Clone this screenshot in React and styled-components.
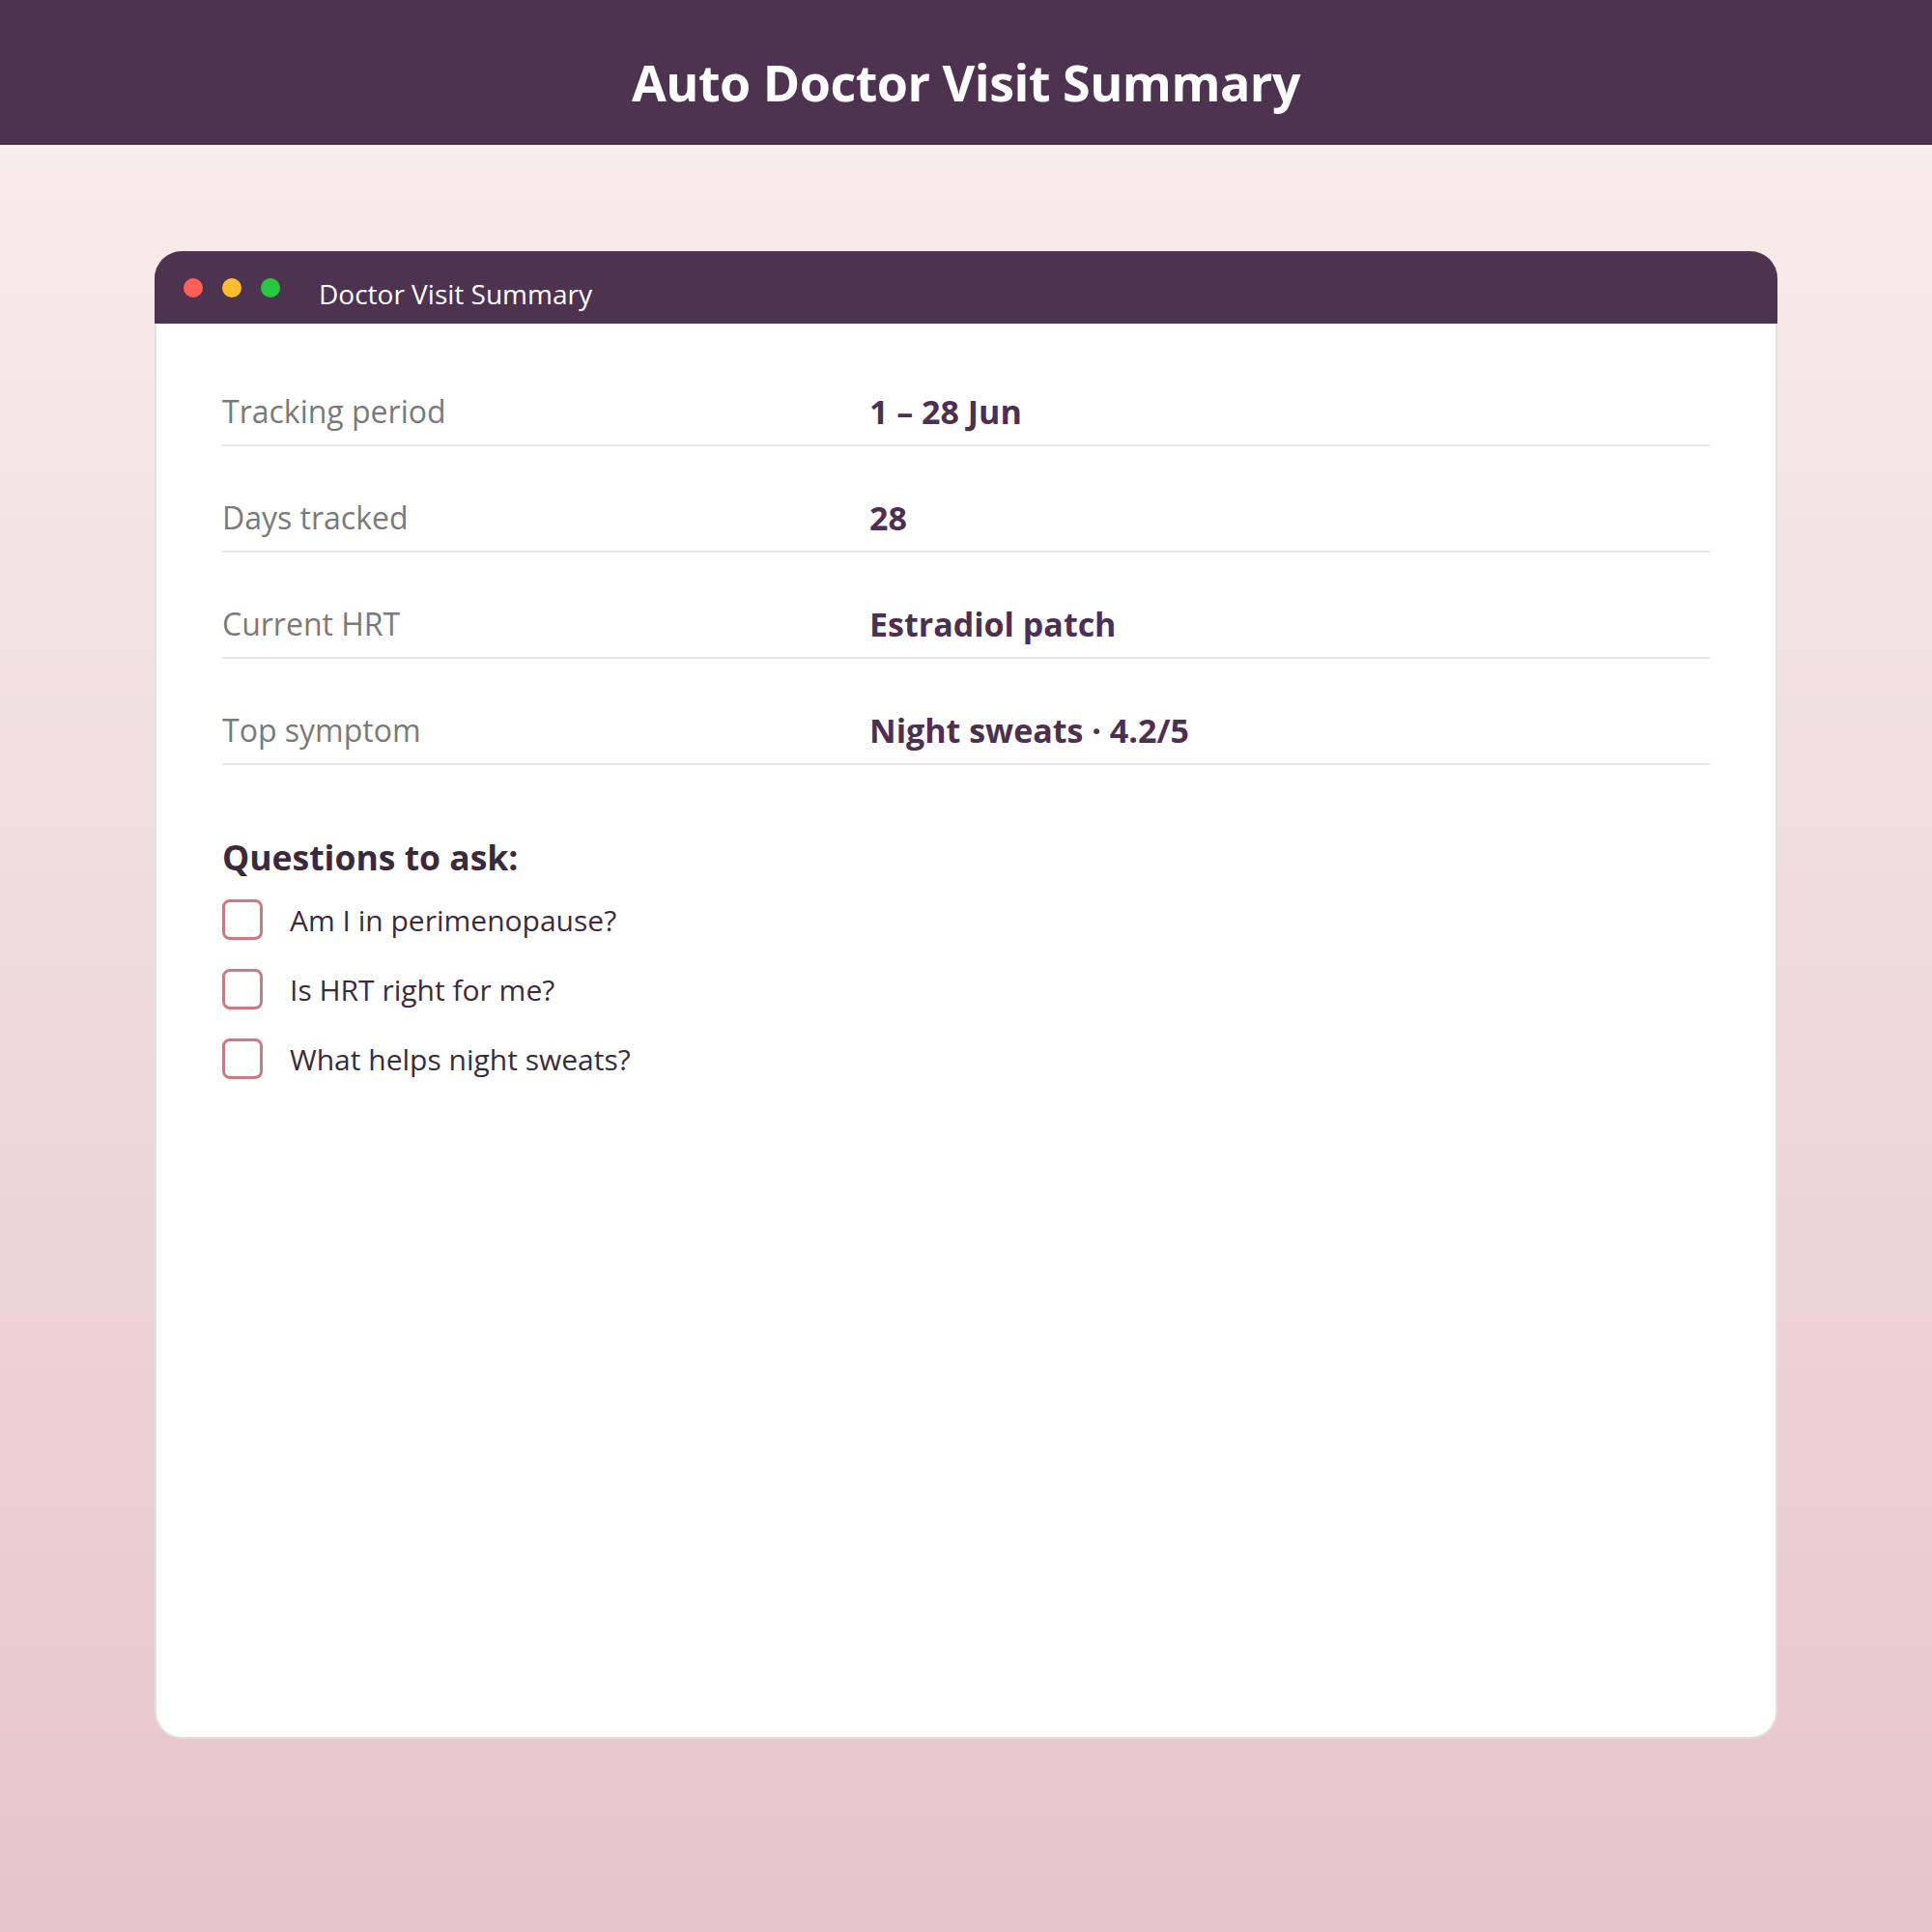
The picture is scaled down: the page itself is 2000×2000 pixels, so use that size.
import React from 'react'
import styled, { createGlobalStyle } from 'styled-components'

const GlobalStyle = createGlobalStyle`
    body {
        margin: 0;
        font-family: "Open Sans", "Noto Sans", sans-serif;
    }
`

const rows = [
    { label: "Tracking period", value: "1 – 28 Jun" },
    { label: "Days tracked", value: "28" },
    { label: "Current HRT", value: "Estradiol patch" },
    { label: "Top symptom", value: "Night sweats · 4.2/5" }
]

const questions = [
    "Am I in perimenopause?",
    "Is HRT right for me?",
    "What helps night sweats?"
]

export default function App() {
    return (
        <>
            <GlobalStyle />
            <Page>
                <Header>
                    <h1>Auto Doctor Visit Summary</h1>
                </Header>
                <Main>
                    <Card>
                        <TitleBar>
                            <Dot color="#ff5f57" />
                            <Dot color="#febc2e" />
                            <Dot color="#28c840" />
                            <WindowTitle>Doctor Visit Summary</WindowTitle>
                        </TitleBar>
                        <Body>
                            {rows.map((row) =>
                                <Row key={row.label}>
                                    <Label>{row.label}</Label>
                                    <Value>{row.value}</Value>
                                </Row>
                            )}
                            <Heading>Questions to ask:</Heading>
                            {questions.map((q) =>
                                <Question key={q}>
                                    <Box />
                                    <span>{q}</span>
                                </Question>
                            )}
                        </Body>
                    </Card>
                </Main>
            </Page>
        </>
    )
}

const Page = styled.div`
    min-height: 2000px;
    background: linear-gradient(180deg, #f8f0ed 0%, #e7c5ca 100%);
`

const Header = styled.header`
    height: 150px;
    box-sizing: border-box;
    padding-top: 18px;
    background: #4d3350;
    display: flex;
    align-items: center;
    justify-content: center;
    h1 {
        margin: 0;
        color: #ffffff;
        font-size: 52px;
        font-weight: 700;
        letter-spacing: -0.5px;
    }
`

const Main = styled.main`
    padding: 110px 160px 200px;
`

const Card = styled.section`
    height: 1540px;
    display: flex;
    flex-direction: column;
`

const TitleBar = styled.div`
    height: 75px;
    flex-shrink: 0;
    background: #4d3350;
    border-radius: 28px 28px 0 0;
    display: flex;
    align-items: center;
    gap: 20px;
    padding: 0 30px;
`

const Dot = styled.span`
    width: 20px;
    height: 20px;
    border-radius: 50%;
    background: ${props => props.color};
`

const WindowTitle = styled.span`
    margin-left: 20px;
    color: #ffffff;
    font-size: 28px;
    margin-top: 13px;
`

const Body = styled.div`
    flex: 1;
    background: #ffffff;
    border: 2px solid #e4dfdb;
    border-top: none;
    border-radius: 0 0 28px 28px;
    padding: 17px 68px 0;
`

const Row = styled.div`
    display: grid;
    grid-template-columns: 670px 1fr;
    align-items: center;
    padding: 52px 0 12px;
    line-height: 44px;
    border-bottom: 2px solid #ebe6e2;
`

const Label = styled.span`
    font-size: 32px;
    color: #7a7a7a;
`

const Value = styled.span`
    font-size: 34px;
    font-weight: 700;
    color: #4d2f4f;
`

const Heading = styled.h2`
    margin: 71px 0 5px;
    font-size: 35.5px;
    line-height: 48px;
    font-weight: 700;
    color: #3b2a3c;
`

const Question = styled.div`
    height: 72px;
    display: flex;
    align-items: center;
    gap: 28px;
    font-size: 30px;
    color: #3a2c3b;
`

const Box = styled.span`
    width: 36px;
    height: 36px;
    border: 3px solid #c97a82;
    border-radius: 8px;
`
